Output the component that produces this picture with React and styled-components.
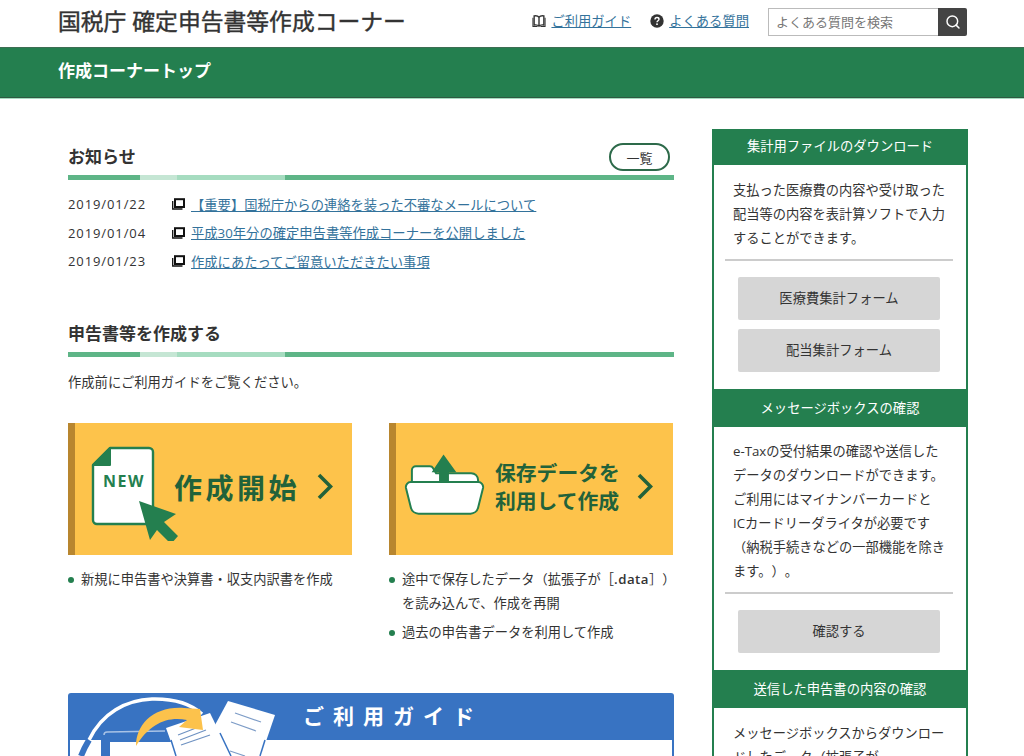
import React from "react";
import styled, { createGlobalStyle } from "styled-components";
import { Search } from "lucide-react";

const news = [
  { date: "2019/01/22", title: "【重要】国税庁からの連絡を装った不審なメールについて" },
  { date: "2019/01/04", title: "平成30年分の確定申告書等作成コーナーを公開しました" },
  { date: "2019/01/23", title: "作成にあたってご留意いただきたい事項" },
];

export default function App() {
  return (
    <Page>
      <GlobalStyle />
      <Header>
        <SiteTitle>国税庁 確定申告書等作成コーナー</SiteTitle>
        <HeaderNav>
          <NavItem>
            <BookIcon />
            <a href="#guide">ご利用ガイド</a>
          </NavItem>
          <NavItem>
            <HelpIcon />
            <a href="#faq">よくある質問</a>
          </NavItem>
          <SearchBox>
            <input placeholder="よくある質問を検索" />
            <button aria-label="検索">
              <Search size={16} strokeWidth={2.2} color="#fff" />
            </button>
          </SearchBox>
        </HeaderNav>
      </Header>
      <GreenBar>
        <span>作成コーナートップ</span>
      </GreenBar>

      <Content>
        <Main>
          <SectionHead>
            <h2>お知らせ</h2>
            <PillButton>一覧</PillButton>
          </SectionHead>
          <StripeBar />
          <NewsList>
            {news.map((n) => (
              <li key={n.date}>
                <time>{n.date}</time>
                <WindowIcon />
                <a href="#news">{n.title}</a>
              </li>
            ))}
          </NewsList>

          <SectionHead $second>
            <h2>申告書等を作成する</h2>
          </SectionHead>
          <StripeBar />
          <Lead>作成前にご利用ガイドをご覧ください。</Lead>

          <Cards>
            <div>
              <Banner>
                <NewDocIcon />
                <BigLabel>作成開始</BigLabel>
                <Chevron />
              </Banner>
              <Bullets>
                <li>新規に申告書や決算書・収支内訳書を作成</li>
              </Bullets>
            </div>
            <div>
              <Banner>
                <FolderIcon />
                <TwoLineLabel>
                  保存データを
                  <br />
                  利用して作成
                </TwoLineLabel>
                <Chevron />
              </Banner>
              <Bullets>
                <li>
                  途中で保存したデータ（拡張子が［<b>.data</b>］）
                  <br />
                  を読み込んで、作成を再開
                </li>
                <li>過去の申告書データを利用して作成</li>
              </Bullets>
            </div>
          </Cards>

          <GuideBanner>
            <GuideArt />
            <GuideTitle>ご利用ガイド</GuideTitle>
            <GuideInner />
          </GuideBanner>
        </Main>

        <Side>
          <SideHead $first>集計用ファイルのダウンロード</SideHead>
          <SideText>
            支払った医療費の内容や受け取った
            <br />
            配当等の内容を表計算ソフトで入力
            <br />
            することができます。
          </SideText>
          <SideRule />
          <SideButtons>
            <SideButton>医療費集計フォーム</SideButton>
            <SideButton>配当集計フォーム</SideButton>
          </SideButtons>

          <SideHead>メッセージボックスの確認</SideHead>
          <SideText>
            e-Taxの受付結果の確認や送信した
            <br />
            データのダウンロードができます。
            <br />
            ご利用にはマイナンバーカードと
            <br />
            ICカードリーダライタが必要です
            <br />
            （納税手続きなどの一部機能を除き
            <br />
            ます。）。
          </SideText>
          <SideRule />
          <SideButtons>
            <SideButton>確認する</SideButton>
          </SideButtons>

          <SideHead>送信した申告書の内容の確認</SideHead>
          <SideText>
            メッセージボックスからダウンロー
            <br />
            ドしたデータ（拡張子が
          </SideText>
        </Side>
      </Content>
    </Page>
  );
}

function BookIcon() {
  return (
    <svg width="14" height="14" viewBox="0 0 15 14" fill="none" stroke="#333" strokeWidth="1.5">
      <path d="M7.500 3C6.500 1.600 4.500 1.200 2.300 1.500V11.300C4.500 11 6.500 11.200 7.500 12.500 8.500 11.200 10.500 11 12.700 11.300V1.500C10.500 1.200 8.500 1.600 7.500 3zM7.500 3V12.500" />
      <path d="M1 3.500V13H6M14 3.500V13H9" strokeWidth="1.100" />
    </svg>
  );
}

function HelpIcon() {
  return (
    <svg width="14" height="14" viewBox="0 0 14 14">
      <circle cx="7" cy="7" r="6.700" fill="#333" />
      <path d="M5 5.400c0-1.300 1-1.900 2-1.900s2 .6 2 1.700c0 1.500-2 1.500-2 3" fill="none" stroke="#fff" strokeWidth="1.400" />
      <rect x="6.200" y="9.400" width="1.600" height="1.600" fill="#fff" />
    </svg>
  );
}

function WindowIcon() {
  return (
    <IconSlot width="13" height="12" viewBox="0 0 13 12" fill="none" stroke="#111">
      <rect x="3" y="1.200" width="9" height="7.800" strokeWidth="2" />
      <path d="M.7 3v8h9.800" strokeWidth="1.300" />
    </IconSlot>
  );
}

function Chevron() {
  return (
    <ChevronSvg width="16" height="27" viewBox="0 0 16 27" fill="none">
      <path d="M2 2l11.500 11.500L2 25" stroke="#22623a" strokeWidth="3.600" />
    </ChevronSvg>
  );
}

function NewDocIcon() {
  return (
    <DocSvg width="90" height="95" viewBox="0 0 90 95">
      <path
        d="M19 2H58a4 4 0 0 1 4 4V74a4 4 0 0 1-4 4H6a4 4 0 0 1-4-4V19z"
        fill="#fff"
        stroke="#247f4f"
        strokeWidth="2.400"
        strokeLinejoin="round"
      />
      <path d="M19 2V19H2z" fill="#247f4f" stroke="#247f4f" strokeWidth="2" strokeLinejoin="round" />
      <text x="33" y="41" textAnchor="middle" fontSize="16" fontWeight="700" letterSpacing="1.500" fill="#247f4f" fontFamily="Open Sans, sans-serif">
        NEW
      </text>
      <path d="M48 55l37 13-12 8 14 14-7 8-14-14-7 10z" fill="#247f4f" />
    </DocSvg>
  );
}

function FolderIcon() {
  return (
    <FolderSvg width="81" height="62" viewBox="0 0 82 62">
      <path
        d="M8 34V16a4 4 0 0 1 4-4H26a4 4 0 0 1 3.500 2l3 5H68a7 7 0 0 1 7 7V34z"
        fill="#fff"
        stroke="#247f4f"
        strokeWidth="2"
      />
      <path
        d="M7 28H75a5 5 0 0 1 5 6l-5 20a8 8 0 0 1-8 6H15a8 8 0 0 1-8-6L2 34a5 5 0 0 1 5-6z"
        fill="#fff"
        stroke="#247f4f"
        strokeWidth="2"
      />
      <path d="M40 0l13 18H45.500V27H35.500V18H28z" fill="#247f4f" />
    </FolderSvg>
  );
}

function GuideArt() {
  return (
    <GuideSvg width="240" height="63" viewBox="0 0 240 63">
      {/* arc and monitor */}
      <path d="M21 47C34 20 58 7 84 6c22-.5 38 4 50 15" fill="none" stroke="#fff" strokeWidth="3.500" />
      <path d="M21 47C18 52 15 58 13 63" fill="none" stroke="#3873c2" strokeWidth="6" />
      <path d="M36 42c0-2 1-3 3-3l58-1" fill="none" stroke="#a9c3e6" strokeWidth="1.500" />
      <path d="M33 63V47h70v2H42v14z" fill="#3873c2" />
      {/* papers */}
      <path d="M160 8l47 14-14 41H158L147 32z" fill="#fff" />
      <path d="M167 20l26 9M163 29l25 9M162 58l15 5" stroke="#7d9cc7" strokeWidth="1.200" />
      <path d="M197 47l-5 16" stroke="#3873c2" strokeWidth="1.500" />
      <path d="M98 35l44-15 21 43h-55z" fill="#fff" />
      <path d="M110 42l18-7M112 47l26-10M113 52l29-10" stroke="#6f92c2" strokeWidth="1.200" />
      <path d="M103 47l5 16M152 40l11 23" stroke="#3873c2" strokeWidth="1.500" fill="none" />
      {/* arrow */}
      <path d="M68 53C68 32 85 13 116 15L132 16 135 37 111 34 119 27C100 23 82 30 68 53z" fill="#fcc24c" />
    </GuideSvg>
  );
}

const GREEN = "#247f4f";
const FONT = `"Open Sans", "Noto Sans CJK JP", sans-serif`;

const GlobalStyle = createGlobalStyle`
  html, body {
    margin: 0;
    padding: 0;
    height: 756px;
    overflow: hidden;
    background: #fff;
  }
  * { box-sizing: border-box; }
  body {
    font-family: ${FONT};
    font-size: 13.3px;
    color: #333;
    text-spacing-trim: space-all;
  }
  a { color: #33729b; }
  ul { list-style: none; margin: 0; padding: 0; }
`;

const Page = styled.div`
  width: 1024px;
  height: 756px;
  overflow: hidden;
`;

const Header = styled.header`
  height: 47px;
  padding: 0 57px 0 58px;
  display: flex;
  align-items: center;
  justify-content: space-between;
`;

const SiteTitle = styled.h1`
  margin: 0 0 3px;
  font-size: 22.800px;
  font-weight: 400;
  -webkit-text-stroke: 0.4px #333;
  color: #333;
  line-height: 1;
`;

const HeaderNav = styled.nav`
  display: flex;
  align-items: center;
  gap: 19px;
`;

const NavItem = styled.div`
  display: flex;
  align-items: center;
  gap: 5px;
  font-size: 13.300px;
  margin-bottom: 6px;
`;

const SearchBox = styled.div`
  display: flex;
  width: 199px;
  height: 28px;
  margin-bottom: 4px;

  input {
    flex: 1;
    min-width: 0;
    border: 1px solid #bbb;
    border-right: 0;
    padding: 0 7px;
    font: 13px ${FONT};
    outline: 0;

    &::placeholder {
      color: #777;
      opacity: 1;
    }
  }

  button {
    width: 29px;
    border: 0;
    background: #444;
    border-radius: 0 2px 2px 0;
    display: flex;
    align-items: center;
    justify-content: center;
    padding: 0;
  }
`;

const GreenBar = styled.div`
  height: 51px;
  background: ${GREEN};
  border-top: 1px solid #3d6e53;
  border-bottom: 1px solid #2d5a41;
  padding: 0 0 7px 58px;
  display: flex;
  align-items: center;
  color: #fff;
  font-size: 17px;
  font-weight: 700;
  box-shadow: 0 1px 0 #a6dcc0;
`;

const Content = styled.div`
  display: flex;
  align-items: flex-start;
  padding: 31px 56px 0 68px;
  gap: 38px;
`;

const Main = styled.main`
  width: 606px;
  flex: none;
`;

const SectionHead = styled.div`
  height: 34px;
  margin-top: ${(p) => (p.$second ? "42px" : "12px")};
  display: flex;
  align-items: center;
  justify-content: space-between;

  h2 {
    margin: 0 0 ${(p) => (p.$second ? "4px" : "6px")};
    font-size: 17px;
    font-weight: 700;
    color: #333;
  }
`;

const PillButton = styled.span`
  width: 61px;
  height: 28px;
  margin: 0 4px 2px 0;
  border: 2px solid #2d6a4a;
  border-radius: 14px;
  display: flex;
  align-items: center;
  justify-content: center;
  font-size: 13px;
`;

const StripeBar = styled.div`
  height: 5px;
  background: linear-gradient(
    to right,
    #5eb587 72px,
    #c5e6d4 72px,
    #c5e6d4 109px,
    #a6dcc0 109px,
    #a6dcc0 217px,
    #5eb587 217px
  );
`;

const NewsList = styled.ul`
  margin-top: 10px;

  li {
    height: 28.500px;
    display: flex;
    align-items: center;
  }

  time {
    width: 104px;
    letter-spacing: 0.9px;
    font-size: 13px;
  }
`;

const IconSlot = styled.svg`
  margin-right: 6px;
  flex: none;
`;

const Lead = styled.p`
  margin: 16px 0 0;
  font-size: 13.300px;
  line-height: 18px;
`;

const Cards = styled.div`
  margin-top: 32px;
  display: grid;
  grid-template-columns: 284px 284px;
  column-gap: 37px;
`;

const Banner = styled.div`
  height: 132px;
  background: #fdc34b;
  border-left: 7px solid #b8862f;
  display: flex;
  align-items: center;
`;

const DocSvg = styled.svg`
  flex: none;
  margin: 9px 0 0 16px;
`;

const FolderSvg = styled.svg`
  flex: none;
  margin: 0 0 8px 8px;
`;

const BigLabel = styled.div`
  margin: 0 0 4px -7px;
  font-size: 28px;
  font-weight: 700;
  letter-spacing: 3.500px;
  color: #22623a;
  white-space: nowrap;
`;

const TwoLineLabel = styled.div`
  margin: 0 0 4px 10px;
  font-size: 20.800px;
  line-height: 28px;
  font-weight: 700;
  color: #22623a;
  white-space: nowrap;
`;

const ChevronSvg = styled.svg`
  flex: none;
  margin: 0 0 5px 17px;
`;

const Bullets = styled.ul`
  margin-top: 12px;

  li {
    position: relative;
    padding-left: 13px;
    font-size: 13.250px;
    line-height: 24.500px;
    margin-bottom: 4px;
    white-space: nowrap;

    &::before {
      content: "";
      position: absolute;
      left: 0;
      top: 10px;
      width: 6px;
      height: 6px;
      border-radius: 50%;
      background: ${GREEN};
    }
  }

  b {
    font-weight: 600;
    letter-spacing: 0.5px;
  }
`;

const GuideBanner = styled.div`
  position: relative;
  margin-top: 45px;
  height: 90px;
  background: #3873c2;
  border-radius: 3px 3px 0 0;
  padding: 0 2px;
`;

const GuideSvg = styled.svg`
  position: absolute;
  left: 0;
  top: 0;
  z-index: 1;
`;

const GuideTitle = styled.div`
  height: 47px;
  padding: 7px 0 0 233px;
  font-size: 21px;
  font-weight: 700;
  letter-spacing: 9px;
  color: #fff;
  line-height: 32px;
`;

const GuideInner = styled.div`
  height: 43px;
  background: #fff;
`;

const Side = styled.aside`
  width: 256px;
  flex: none;
  border: solid ${GREEN};
  border-width: 0 2px;
  height: 640px;
`;

const SideHead = styled.div`
  height: ${(p) => (p.$first ? "36px" : "38px")};
  margin: 0 -2px;
  padding-bottom: ${(p) => (p.$first ? "3px" : "1px")};
  background: ${GREEN};
  color: #fff;
  font-size: 13.300px;
  display: flex;
  align-items: center;
  justify-content: center;
`;

const SideText = styled.p`
  margin: 0;
  padding: 12.500px 0 9px 19px;
  font-size: 13.250px;
  line-height: 24px;
  white-space: nowrap;
`;

const SideRule = styled.hr`
  margin: 0 13px 0 11px;
  border: 0;
  height: 2px;
  background: #ccc;
`;

const SideButtons = styled.div`
  padding: 16px 26px 17px 24px;
  display: flex;
  flex-direction: column;
  gap: 9px;
`;

const SideButton = styled.div`
  height: 43px;
  padding-bottom: 2px;
  background: #d6d6d6;
  border-radius: 2px;
  display: flex;
  align-items: center;
  justify-content: center;
  font-size: 13.300px;
`;
